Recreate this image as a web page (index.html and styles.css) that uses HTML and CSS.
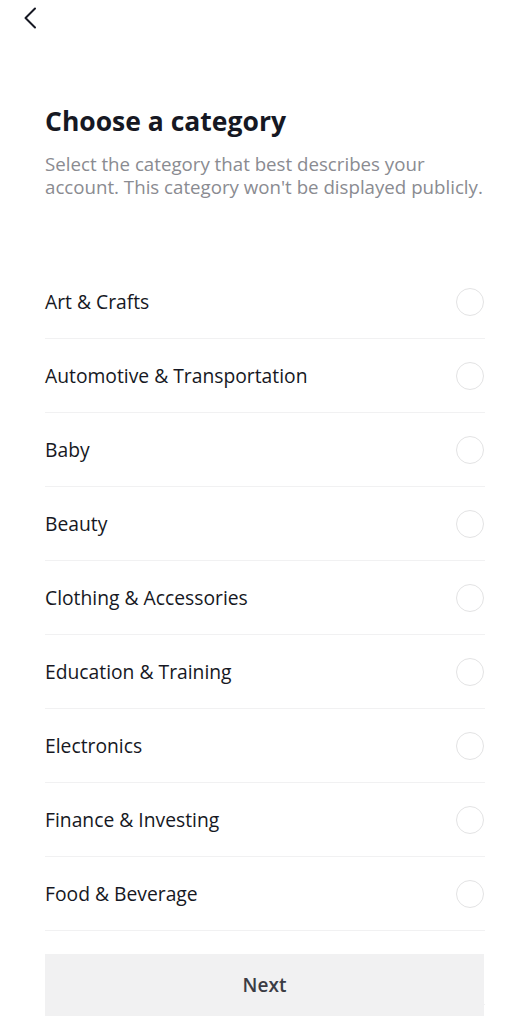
FILE: index.html
```html
<!DOCTYPE html>
<html lang="en">
<head>
  <meta charset="UTF-8" />
  <title>Choose a category</title>
  <link rel="stylesheet" href="styles.css">
</head>
<body>
  <div class="topbar">
    <button class="back" aria-label="Back">
      <svg width="16" height="22" viewBox="0 0 16 22">
        <path d="M13 1.5 L3.5 11 L13 20.5" fill="none" stroke="#161823" stroke-width="2" stroke-linecap="round" stroke-linejoin="round"/>
      </svg>
    </button>
  </div>

  <div class="content">
    <h1>Choose a category</h1>
    <p class="hint">Select the category that best describes your account. This category won't be displayed publicly.</p>

    <ul class="categories">
      <li><span>Art &amp; Crafts</span><i class="radio"></i></li>
      <li><span>Automotive &amp; Transportation</span><i class="radio"></i></li>
      <li><span>Baby</span><i class="radio"></i></li>
      <li><span>Beauty</span><i class="radio"></i></li>
      <li><span>Clothing &amp; Accessories</span><i class="radio"></i></li>
      <li><span>Education &amp; Training</span><i class="radio"></i></li>
      <li><span>Electronics</span><i class="radio"></i></li>
      <li><span>Finance &amp; Investing</span><i class="radio"></i></li>
      <li><span>Food &amp; Beverage</span><i class="radio"></i></li>
      <li><span>Gaming</span><i class="radio"></i></li>
    </ul>
  </div>

  <div class="footer">
    <button class="next">Next</button>
  </div>
</body>
</html>
```

FILE: styles.css
```css
html, body {
  margin: 0;
  padding: 0;
  height: 1024px;
  overflow: hidden;
}
body {
  font-family: "Open Sans", "Liberation Sans", sans-serif;
  background-color: #ffffff;
  color: #161823;
}
.topbar {
  height: 36px;
  padding-left: 22px;
  display: flex;
  align-items: center;
}
.back {
  background: none;
  border: none;
  padding: 0;
  display: flex;
}
.content {
  padding: 0 45px;
}
h1 {
  margin: 69px 0 0;
  font-size: 26.5px;
  font-weight: 700;
  line-height: 32px;
}
.hint {
  margin: 15px 0 0;
  font-size: 18.7px;
  line-height: 23px;
  color: #8a8b91;
}
.categories {
  list-style: none;
  margin: 67px 0 0;
  padding: 0;
}
.categories li {
  height: 73px;
  border-bottom: 1px solid #f1f1f2;
  display: flex;
  align-items: center;
  justify-content: space-between;
  font-size: 19.3px;
}
.radio {
  width: 26px;
  height: 26px;
  border: 1.5px solid #e3e3e4;
  border-radius: 50%;
  margin-right: 1px;
}
.footer {
  position: fixed;
  left: 45px;
  right: 46px;
  top: 954px;
}
.next {
  width: 100%;
  height: 62px;
  border: none;
  background-color: #f1f1f2;
  color: #3b3c44;
  font-family: inherit;
  font-size: 19px;
  font-weight: 600;
}
```
